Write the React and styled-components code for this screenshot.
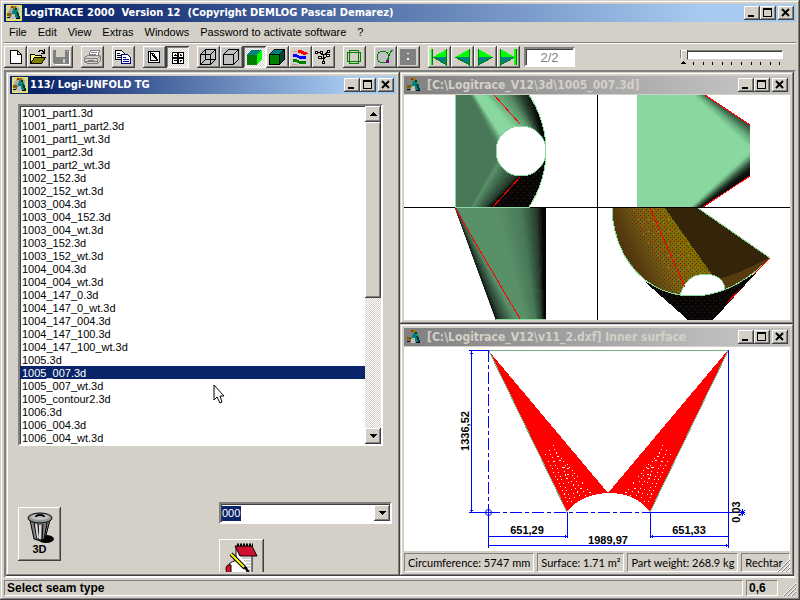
import React, { useState } from 'react';
import styled, { createGlobalStyle } from 'styled-components';

const FILES = [
  '1001_part1.3d',
  '1001_part1_part2.3d',
  '1001_part1_wt.3d',
  '1001_part2.3d',
  '1001_part2_wt.3d',
  '1002_152.3d',
  '1002_152_wt.3d',
  '1003_004.3d',
  '1003_004_152.3d',
  '1003_004_wt.3d',
  '1003_152.3d',
  '1003_152_wt.3d',
  '1004_004.3d',
  '1004_004_wt.3d',
  '1004_147_0.3d',
  '1004_147_0_wt.3d',
  '1004_147_004.3d',
  '1004_147_100.3d',
  '1004_147_100_wt.3d',
  '1005.3d',
  '1005_007.3d',
  '1005_007_wt.3d',
  '1005_contour2.3d',
  '1006.3d',
  '1006_004.3d',
  '1006_004_wt.3d',
];

const MENUS = ['File', 'Edit', 'View', 'Extras', 'Windows', 'Password to activate software', '?'];

const Cube = ({ hidden, top = 'none', front = 'none', side = 'none', stroke = '#000' }) => (
  <g stroke={stroke}>
    <path d="M3.5 8.5l5-5h10l-5 5z" fill={top} />
    <path d="M3.5 8.5h10v10h-10z" fill={front} />
    <path d="M13.5 8.5l5-5v10l-5 5z" fill={side} />
    {hidden && <path d="M8.5 3.5v10h10M8.5 13.5l-5 5" fill="none" />}
  </g>
);

const Play = () => (
  <>
    <path d="M4 3L19 11H4z" fill="#0f0" />
    <path d="M4 11H19L4 19z" fill="#008080" />
    <path d="M4.5 3v16L19 11" fill="none" stroke="#008000" />
  </>
);

const ICONS = {
  new: <path d="M6.5 4.5h7l4 4v9h-11zM13.5 4.5v4h4" fill="#fff" stroke="#000" />,
  open: (
    <>
      <path d="M3.5 17.5v-9h4l1 1h6v3h-7z" fill="#ffff80" stroke="#000" />
      <path d="M3.5 17.5l4-6h11l-4 6z" fill="#808000" stroke="#000" />
      <path d="M11 5.5h1l1-1h2l2 2M17.5 3v4h-4" fill="none" stroke="#000" />
    </>
  ),
  save: (
    <>
      <path d="M4 5h16v14H5z" fill="#fff" />
      <path d="M3 4h16v14H4l-1-1z" fill="#808080" />
      <path d="M6 4h9v7H6zM13 13h2v4h-2zM17 5h1v1h-1z" fill="#d4d0c8" />
    </>
  ),
  print: (
    <g fill="none" stroke="#808080">
      <path d="M7.5 10.5l2-6h9l-2 6M10 6.5h6M9 8.5h6" fill="#fff" />
      <path d="M3.5 11.5l3-2h11l2 1v4l-3 3h-10l-3-2z" fill="#d4d0c8" />
      <path d="M3 12.5h13l3-2M4 15.5h12M16.5 12v5M6 17.5h9M7 14h6" />
    </g>
  ),
  copy: (
    <g fill="#fff">
      <path d="M3.5 4.5h6l3 3v6h-9z" stroke="#000" />
      <path d="M5 7.5h3M5 9.5h5M5 11.5h5" stroke="#000" />
      <path d="M9.5 8.5h6l3 3v6h-9z" stroke="#000080" />
      <path d="M11 11.5h3M11 13.5h6M11 15.5h6" stroke="#000080" />
    </g>
  ),
  page: (
    <>
      <path d="M2 2h18v18H2z" fill="#c0c0c0" />
      <path d="M5.5 5.5h11v11h-11z" fill="#fff" stroke="#000" />
      <path d="M7.5 14.5v-7h3l4 6v1zM7 6l8 9" fill="none" stroke="#000" />
    </>
  ),
  grid: (
    <>
      <path d="M6.5 6.5h11v11h-11z" fill="#fff" stroke="#000" />
      <path d="M12 6v12M6 12h12" stroke="#000" strokeWidth="2" />
      <path d="M8 9.5h3M14 9.5h2M8 14.5h3M14 14.5h2M9.5 8v2M14.5 8v2M14.5 14v2" stroke="#000" />
    </>
  ),
  wire: (
    <>
      <path d="M2 2h18v18H2z" fill="#c0c0c0" />
      <Cube hidden />
    </>
  ),
  lines: (
    <>
      <path d="M2 2h18v18H2z" fill="#c0c0c0" />
      <Cube />
    </>
  ),
  shade: <Cube top="#008080" front="#008000" side="#00ff00" stroke="none" />,
  solid: <Cube top="#008080" front="#008000" side="#004830" />,
  waves: (
    <g fill="none" strokeWidth="3">
      <path d="M9 5.5h3q3 3 6 1" stroke="#f00" />
      <path d="M4 10q4-1 6 1t7 0" stroke="#00f" />
      <path d="M4 15q4-1 6 1t7 0" stroke="#008000" />
      <path d="M4 5.5h4M3 18.5h5" stroke="#d89090" strokeWidth="1" />
    </g>
  ),
  nodes: (
    <g fill="none" stroke="#000">
      <path d="M4 6.5h4l2 2h3l3-3M11.5 9v7M8 11l3 2M14 11l-3 2" />
      <path d="M3.5 5.5h2v2h-2zM8.5 5.5h2v2h-2zM15.5 4.5h2v2h-2zM14.5 8.5h3v2h-3zM6.5 10.5h3v2h-3zM10.5 15.5h2v2h-2z" fill="#fff" />
    </g>
  ),
  frame: (
    <>
      <path d="M3 3h17v16H3z" fill="#d4d0c8" />
      <path d="M6.5 4.5h9v13h-9zM4.5 6.5h13v9h-13z" fill="none" stroke="#008000" />
    </>
  ),
  tangent: (
    <>
      <path d="M2 2h18v18H2z" fill="#c0c0c0" />
      <circle cx="9" cy="11" r="6" fill="none" stroke="#008000" />
      <path d="M19 4q-3 1-4 6l-2 5" fill="none" stroke="#008000" />
      <path d="M12 14h3v3h-3z" fill="#800080" />
    </>
  ),
  panel: (
    <>
      <path d="M3 3h16v16H3z" fill="#808080" />
      <path d="M10 7h2v1h-2zM10 12h2v2h-2z" fill="#fff" />
    </>
  ),
  first: (
    <>
      <path d="M3 3h2v16H3z" fill="#008000" />
      <path d="M3 3h1v16H3z" fill="#0f0" />
      <path d="M19 3L5 11h14z" fill="#0f0" />
      <path d="M5 11h14v8z" fill="#008080" />
      <path d="M18.5 3v16L5 11" fill="none" stroke="#008000" />
    </>
  ),
  prev: (
    <g transform="matrix(-1 0 0 1 23 0)">
      <Play />
    </g>
  ),
  next: <Play />,
  last: (
    <>
      <g transform="translate(-1 0)">
        <Play />
      </g>
      <path d="M17 3h3v16h-3z" fill="#0f0" />
      <path d="M19 3h1v16h-1z" fill="#008000" />
    </>
  ),
};

const TOOL_GROUPS = [
  ['new', 'open', 'save'],
  ['print'],
  ['copy'],
  ['page', 'grid'],
  ['wire', 'lines', 'shade', 'solid', 'waves', 'nodes'],
  ['frame'],
  ['tangent', 'panel'],
  ['first', 'prev', 'next', 'last'],
];

const Logo = ({ dim }) => (
  <svg width="16" height="16" viewBox="0 0 16 16" shapeRendering="crispEdges" aria-hidden="true">
    {!dim && (
      <>
        <path d="M0 0h16v16H0z" fill="#d8d4a0" />
        <path d="M.5 .5h15v15H.5z" fill="none" stroke="#f0ec30" strokeDasharray="2 1" />
        <path d="M5 1h5l3 3v9H2V7z" fill="#a8a8a0" />
      </>
    )}
    <path d="M5 1h3v2H5z" fill="#c02010" />
    <path d="M7 1h3v3H7z" fill="#888000" />
    <path d="M7 4h2l4 9h-3L8 8l-2 3H5z" fill="#008080" />
    <path d="M9 3h2l3 10h-2z" fill="#003838" />
    <path d="M1 8h4v3H1zM4 10h2v2H4z" fill="#806000" />
    <path d="M6 9h3v5H5v-3z" fill="#c0c0c0" />
    <path d="M1 12h3v1H1zM10 13h4v1h-4z" fill="#000" />
    <path d="M10 5h2v2h-2z" fill="#00a050" />
  </svg>
);

const CaptionButtons = () => (
  <CaptionGroup>
    <CaptionButton type="button" aria-label="Minimize">
      <svg width="16" height="14" shapeRendering="crispEdges">
        <path d="M4 9h6v2H4z" />
      </svg>
    </CaptionButton>
    <CaptionButton type="button" aria-label="Maximize">
      <svg width="16" height="14" shapeRendering="crispEdges">
        <path d="M3 2h9v9H3zM4 4v6h7V4z" fillRule="evenodd" />
      </svg>
    </CaptionButton>
    <CaptionButton type="button" aria-label="Close" $gap>
      <svg width="16" height="14">
        <path d="M4 3l7 7M11 3l-7 7" stroke="#000" strokeWidth="2" />
      </svg>
    </CaptionButton>
  </CaptionGroup>
);

const TitleBar = ({ title, inactive }) => (
  <Caption $inactive={inactive}>
    <Logo dim={inactive} />
    <CaptionText $inactive={inactive}>{title}</CaptionText>
    <CaptionButtons />
  </Caption>
);

const Arrow = ({ up }) => (
  <svg width="7" height="4" viewBox="0 0 7 4" shapeRendering="crispEdges" aria-hidden="true">
    <path d={up ? 'M3 0h1v1h1v1h1v1h1v1H0V3h1V2h1V1h1z' : 'M0 0h7v1H6v1H5v1H4v1H3V3H2V2H1V1H0z'} />
  </svg>
);

const mix = (a, b, t) => a.map((v, i) => Math.round(v + (b[i] - v) * t));

// Colour at position t of a list of [position, [r, g, b]] stops
const shadeAt = (stops, t) => {
  let i = 1;
  while (i < stops.length - 1 && stops[i][0] < t) i += 1;
  const [p0, c0] = stops[i - 1];
  const [p1, c1] = stops[i];
  return `rgb(${mix(c0, c1, Math.max(0, Math.min(1, (t - p0) / (p1 - p0)))).join(',')})`;
};

const DARK = [72, 120, 88];
const MID = [88, 144, 104];
const LIGHT = [136, 216, 160];
const DEEP = [40, 64, 48];
const BLACK = [8, 6, 2];

// Strips ruled between two edges; from(t) and to(t) give the end points
const Ruled = ({ from, to, stops, count = 28 }) => (
  <>
    {Array.from({ length: count }, (_, i) => {
      const a = i / count;
      const b = (i + 1) / count;
      const colour = shadeAt(stops, (a + b) / 2);
      const points = [from(a), from(b), to(b), to(a)].map((p) => p.join(',')).join(' ');
      return <polygon key={i} points={points} fill={colour} stroke={colour} />;
    })}
  </>
);

const line = (x1, y1, x2, y2) => (t) => [x1 + (x2 - x1) * t, y1 + (y2 - y1) * t];

const hole = (sign) => (t) => {
  const a = Math.PI * (1 - t);
  return [117 + 25 * Math.cos(a), 56 - sign * 25 * Math.sin(a)];
};

const rim = (sign) => (t) => {
  if (t < 0.5) return [43, 56 - sign * 101];
  const a = Math.PI * (1 - t);
  return [41 + 101 * Math.cos(a), 56 - sign * 101 * Math.sin(a)];
};

const ModelViews = () => (
  <Drawing viewBox="0 0 386 225" shapeRendering="crispEdges" role="img" aria-label="Four views of the part">
    <defs>
      <clipPath id="topView">
        <path d="M51 0H125A101 101 0 0 1 125 112H51z" />
      </clipPath>
      <clipPath id="sideView">
        <path d="M233 0H301L346 30V81L299 112H233z" />
      </clipPath>
      <clipPath id="frontView">
        <path d="M51 113H142V225H92z" />
      </clipPath>
      <clipPath id="isoView">
        <path d="M208 113Q208 136 220 160Q244 201 290 201Q330 200 366 163L294 113z" />
      </clipPath>
      <linearGradient id="rust" gradientUnits="userSpaceOnUse" x1="214" y1="165" x2="275" y2="135">
        <stop offset="0" stopColor="#483008" />
        <stop offset="0.25" stopColor="#583c10" />
        <stop offset="0.6" stopColor="#786010" />
        <stop offset="1" stopColor="#807000" />
      </linearGradient>
      <pattern id="grain" width="4" height="4" patternUnits="userSpaceOnUse">
        <path d="M0 0h1v1H0zM2 2h1v1H2z" fill="#483410" />
      </pattern>
      <pattern id="sparks" width="10" height="12" patternUnits="userSpaceOnUse">
        <path d="M1 1h1v1H1zM6 3h1v1H6zM3 7h1v1H3zM8 10h1v1H8z" fill="#f00" />
        <path d="M4 4h1v1H4zM9 7h1v1H9z" fill="#908870" />
      </pattern>
      <pattern id="soot" width="6" height="6" patternUnits="userSpaceOnUse">
        <path d="M0 0h6v6H0z" fill="#080604" />
        <path d="M0 1h1v1H0zM3 4h1v1H3z" fill="#302410" />
        <path d="M4 1h1v1H4z" fill="#101038" />
      </pattern>
    </defs>

    <path d="M0 112.5H386M193.5 0V225" stroke="#000" />

    <g clipPath="url(#topView)">
      <path d="M51 0H145V112H51z" fill="#487858" />
      <Ruled
        from={rim(1)}
        to={hole(1)}
        stops={[[0, DARK], [0.08, DARK], [0.14, MID], [0.22, LIGHT], [0.38, LIGHT], [0.5, [112, 184, 136]], [0.62, MID], [0.74, DEEP], [0.86, BLACK], [1, BLACK]]}
        count={48}
      />
      <Ruled
        from={rim(-1)}
        to={hole(-1)}
        stops={[[0, DARK], [0.1, DARK], [0.16, MID], [0.24, DARK], [0.42, DEEP], [0.52, BLACK], [1, BLACK]]}
        count={48}
      />
      <path d="M116 82L145 60V112H90z" fill="url(#soot)" />
    </g>
    <path d="M125 0A101 101 0 0 1 125 112M51.5 0V112.5H126" fill="none" stroke="#88d8a0" />
    <circle cx="117" cy="56" r="25" fill="#fff" stroke="#88d8a0" />
    <path d="M90 0L116 29M116 82L89 112" stroke="#f00" />

    <g clipPath="url(#sideView)">
      <path d="M233 0H346V112H233z" fill="#88d8a0" />
      <Ruled
        from={line(302, 0, 284, -4)}
        to={line(346, 30, 346, 54)}
        stops={[[0, [40, 72, 52]], [0.3, DARK], [0.6, [104, 176, 128]], [1, LIGHT]]}
      />
      <Ruled
        from={line(300, 112, 284, 114)}
        to={line(346, 81, 346, 57)}
        stops={[[0, BLACK], [0.3, [16, 20, 16]], [0.5, DEEP], [0.75, MID], [1, LIGHT]]}
      />
    </g>
    <path d="M301 0L346 30M346 81L299 112" stroke="#f00" />

    <g clipPath="url(#frontView)">
      <path d="M51 113H142V225H92z" fill="#589068" />
      <Ruled from={line(51, 113, 54, 113)} to={line(91, 225, 112, 225)} stops={[[0, BLACK], [0.3, DEEP], [0.8, DARK], [1, MID]]} />
      <Ruled
        from={line(93, 113, 142, 113)}
        to={line(122, 225, 142, 225)}
        stops={[[0, MID], [0.5, DARK], [0.8, DEEP], [0.94, BLACK], [1, BLACK]]}
      />
    </g>
    <path d="M51 113L116 224" stroke="#f00" />
    <path d="M92 224.5H142" stroke="#88d8a0" />

    <path d="M240 186Q290 214 352 178L309 225H284z" fill="url(#soot)" />
    <g clipPath="url(#isoView)">
      <path d="M206 113H368V204H206z" fill="url(#rust)" />
      <path d="M206 113H262L312 182L280 204H206z" fill="url(#grain)" />
      <path d="M222 113H260L300 170L276 200z" fill="url(#sparks)" />
      <path d="M261 113H294L368 163L340 172L309 181z" fill="#342409" />
      <path d="M309 181Q340 178 368 161V204H300z" fill="#583c10" />
      <path d="M306 178L314 184Q338 178 366 162L340 160z" fill="#342409" />
      <path d="M276 201Q281 180 301 179Q320 180 322 196V204H276z" fill="#fff" />
    </g>
    <path d="M208 113Q208 136 220 160Q244 201 290 201Q330 200 366 163L294 113" fill="none" stroke="#88d8a0" />
    <path d="M276 201Q281 180 301 179Q320 180 321 195" fill="none" stroke="#88d8a0" />
    <path d="M246 113L281 192M323 208L336 194M349 180L366 163" stroke="#f00" />
  </Drawing>
);

const UnfoldView = () => (
  <Drawing viewBox="0 0 386 204" shapeRendering="crispEdges" role="img" aria-label="Unfolded surface with dimensions">
    <path d="M84 3L204 146L324 3L246 165Q232 146 205 146Q176 147 163 165z" fill="#f00" />
    <path d="M84 3.5H324M84.5 3L163 165M324.5 3L246 165" fill="none" stroke="#78b088" />
    <g stroke="#fff" strokeDasharray="1 3">
      <path d="M141 107L165 157M145 103L168 156M149 98L172 153M152 106L177 151M157 111L182 149M163 117L188 148" />
      <path d="M267 107L243 157M263 103L240 156M259 98L236 153M256 106L231 151M251 111L226 149M245 117L220 148" />
    </g>
    <g fill="none" stroke="#00f">
      <path d="M65 3.5H84M67.5 3V165M65 165.5H84M84.5 165V201M84 189.5H163M163.5 165V191" />
      <path d="M84 198.5H324M324.5 3V201M246.5 165V191M246 189.5H324M246 165.5H341" />
      <path d="M66 6.5h3M66 163.5h3M161.5 188v3M248.5 188v3M322.5 197v3M336 163l5 5M341 163l-5 5M338.5 162v7" />
      <path d="M84.5 3V165M84 165.5H246" strokeDasharray="12 3 4 3" />
      <circle cx="84.5" cy="165.5" r="3" shapeRendering="auto" />
    </g>
    <Dimension x="123" y="187">651,29</Dimension>
    <Dimension x="285" y="187">651,33</Dimension>
    <Dimension x="204" y="197">1989,97</Dimension>
    <Dimension transform="translate(65 84) rotate(-90)">1336,52</Dimension>
    <Dimension transform="translate(336 165) rotate(-90)">0,03</Dimension>
  </Drawing>
);

const SizeGrip = () => (
  <Grip width="13" height="13" viewBox="0 0 13 13" aria-hidden="true">
    <path d="M0 13L13 0M4 13L13 4M8 13L13 8" stroke="#fff" />
    <path d="M1 13L13 1M5 13L13 5M9 13L13 9" stroke="#808080" />
  </Grip>
);

const App = () => {
  const [selected, setSelected] = useState('1005_007.3d');
  const [mode, setMode] = useState('shade');
  const [code, setCode] = useState('000');

  return (
    <>
      <GlobalStyle />
      <MainWindow>
        <TitleBar title={'LogiTRACE 2000\u00a0 Version 12\u00a0 (Copyright DEMLOG Pascal Demarez)'} />
        <MenuBar>
          {MENUS.map((menu) => (
            <MenuButton key={menu} type="button">
              {menu}
            </MenuButton>
          ))}
        </MenuBar>

        <Toolbar>
          {TOOL_GROUPS.map((group) => (
            <ToolGroup key={group[0]}>
              {group.map((tool) => (
                <ToolButton
                  key={tool}
                  type="button"
                  aria-label={tool}
                  $pressed={tool === 'grid' || tool === mode}
                  onClick={() => ['wire', 'lines', 'shade', 'solid'].includes(tool) && setMode(tool)}
                >
                  <svg width="23" height="22" viewBox="0 0 23 22" shapeRendering="crispEdges">
                    {ICONS[tool]}
                  </svg>
                </ToolButton>
              ))}
            </ToolGroup>
          ))}
          <PageField aria-label="Page" defaultValue="2/2" />
          <Slider>
            <SliderInput type="range" min="0" max="10" defaultValue="0" aria-label="Speed" />
            <svg width="100%" height="5" viewBox="0 0 103 5" shapeRendering="crispEdges" aria-hidden="true">
              <path d="M3 0h1v1h1v1h1v1H1V2h1V1h1z" />
              {Array.from({ length: 10 }, (_, i) => (
                <path key={i} d={`M${13 + Math.round(i * 9.6)} 1h1v3h-1z`} />
              ))}
            </svg>
          </Slider>
        </Toolbar>

        <Workspace>
          <ChildWindow $tall>
            <TitleBar title="113/ Logi-UNFOLD TG" />
            <Dialog>
              <ListFrame>
                <List role="listbox" aria-label="Parts">
                  {FILES.map((file) => (
                    <ListItem
                      key={file}
                      role="option"
                      aria-selected={file === selected}
                      $selected={file === selected}
                      onClick={() => setSelected(file)}
                    >
                      {file}
                    </ListItem>
                  ))}
                </List>
                <ScrollBar>
                  <ScrollButton type="button" aria-label="Scroll up">
                    <Arrow up />
                  </ScrollButton>
                  <ScrollThumb />
                  <ScrollButton type="button" aria-label="Scroll down">
                    <Arrow />
                  </ScrollButton>
                </ScrollBar>
                <Pointer width="13" height="21" viewBox="0 0 13 21" aria-hidden="true">
                  <path d="M1 1V16L4 13L7 19L9 18L7 12H11z" fill="#fff" stroke="#000" />
                </Pointer>
              </ListFrame>

              <DialogFooter>
                <DeleteButton type="button">
                  <svg width="28" height="32" viewBox="0 0 28 32" aria-hidden="true">
                    <ellipse cx="20" cy="28" rx="8" ry="4" fill="#000" />
                    <path d="M4 9L8 28Q13 31 19 28L24 9z" fill="#808080" stroke="#000" />
                    <path d="M8 12l3 16M12 13l1 16M17 13l-1 16M21 12l-3 16" stroke="#000" />
                    <path d="M10 13l2 14M14 14v14" stroke="#d8d8d8" strokeWidth="2" />
                    <ellipse cx="14" cy="7" rx="12" ry="5" fill="#909898" stroke="#000" />
                    <ellipse cx="14" cy="6" rx="9" ry="3" fill="#c0c0c0" />
                    <path d="M10 6q0-2 4-2t4 2" fill="none" stroke="#000" strokeWidth="2" />
                  </svg>
                  3D
                </DeleteButton>
                <FooterColumn>
                  <Combo>
                    <ComboInput aria-label="Seam code" value={code} onChange={(e) => setCode(e.target.value)} />
                    <ScrollButton type="button" aria-label="Open list">
                      <Arrow />
                    </ScrollButton>
                  </Combo>
                  <NotesButton type="button" aria-label="Notes">
                    <svg width="34" height="34" viewBox="0 0 34 34" aria-hidden="true">
                      <path d="M11 5H27V34H11z" fill="#fff" stroke="#000" />
                      <path d="M17 15h9M19 18h7M21 21h5M22 24h4M23 27h3" stroke="#a0a0a0" />
                      <path d="M10 3H27L32 13H15z" fill="#d01030" stroke="#000" />
                      <path d="M12 2H28" stroke="#000" strokeWidth="3" strokeDasharray="2 1" />
                      <path d="M4 21q7-6 12-2l6 6v4l-10 3-8-2z" fill="#fff" stroke="#000" />
                      <path d="M1 26q0-5 5-4v9H2z" fill="#e01020" stroke="#000" />
                      <path d="M6 11L20 25" stroke="#000" strokeWidth="4" />
                      <path d="M6 11L20 25" stroke="#ffff00" strokeWidth="2" />
                      <path d="M19 24l5 5" stroke="#000" strokeWidth="2" />
                    </svg>
                  </NotesButton>
                </FooterColumn>
              </DialogFooter>
            </Dialog>
          </ChildWindow>

          <ChildWindow>
            <TitleBar inactive title="[C:\Logitrace_V12\3d\1005_007.3d]" />
            <Canvas>
              <ModelViews />
            </Canvas>
          </ChildWindow>

          <ChildWindow>
            <TitleBar inactive title="[C:\Logitrace_V12\v11_2.dxf] Inner surface" />
            <Canvas>
              <UnfoldView />
            </Canvas>
            <InfoBar>
              <InfoPanel>Circumference: 5747 mm</InfoPanel>
              <InfoPanel>Surface: 1.71 m²</InfoPanel>
              <InfoPanel>Part weight: 268.9 kg</InfoPanel>
              <InfoPanel $fill>Rechtar</InfoPanel>
              <SizeGrip />
            </InfoBar>
          </ChildWindow>
        </Workspace>

        <StatusBar>
          <StatusPanel $fill>Select seam type</StatusPanel>
          <StatusPanel>0,6</StatusPanel>
          <SizeGrip />
        </StatusBar>
      </MainWindow>
    </>
  );
};

const GlobalStyle = createGlobalStyle`
  * {
    box-sizing: border-box;
  }

  body {
    margin: 0;
    background: #d4d0c8;
    color: #000;
    font: 11px/13px "Liberation Sans", Arial, sans-serif;
  }

  button, input {
    font: inherit;
    color: inherit;
    border: 0;
    border-radius: 0;
    padding: 0;
    margin: 0;
  }

  svg {
    display: block;
    flex: none;
  }
`;

const windowEdge = `
  padding: 4px;
  background: #d4d0c8;
  box-shadow: inset -1px -1px #404040, inset 1px 1px #d4d0c8, inset -2px -2px #808080, inset 2px 2px #fff;
`;

const raised = `
  background: #d4d0c8;
  box-shadow: inset -1px -1px #404040, inset 1px 1px #fff, inset -2px -2px #808080;
`;

const sunken = `
  border: 2px solid;
  border-color: #808080 #fff #fff #808080;
  box-shadow: inset 1px 1px #404040;
`;

const MainWindow = styled.div`
  ${windowEdge}
  display: flex;
  flex-direction: column;
  height: 100vh;
  min-height: 600px;
`;

const Caption = styled.header`
  display: flex;
  align-items: center;
  flex: none;
  height: 18px;
  padding: 0 2px;
  background: ${(p) =>
    p.$inactive
      ? 'linear-gradient(90deg, #808080, #c0c0c0 85%)'
      : 'linear-gradient(90deg, #0a246a, #0a246a 8%, #a6caf0 88%)'};
`;

const CaptionText = styled.h1`
  flex: 1;
  min-width: 0;
  margin: 0;
  padding-left: ${(p) => (p.$inactive ? '5px' : '2px')};
  overflow: hidden;
  color: ${(p) => (p.$inactive ? '#d4d0c8' : '#fff')};
  font: bold 11px/18px "DejaVu Sans Condensed", "DejaVu Sans", sans-serif;
  font-size: ${(p) => (p.$inactive ? '12px' : '11px')};
  white-space: nowrap;
`;

const CaptionGroup = styled.div`
  display: flex;
`;

const CaptionButton = styled.button`
  ${raised}
  width: 16px;
  height: 14px;
  margin-left: ${(p) => (p.$gap ? '2px' : '0')};
`;

const MenuBar = styled.nav`
  display: flex;
  flex: none;
  height: 22px;
  border-bottom: 1px solid #fff;
  box-shadow: inset 0 -1px #808080;
`;

const MenuButton = styled.button`
  height: 20px;
  padding: 0 6px 0 5px;
  background: transparent;
`;

const Toolbar = styled.div`
  display: flex;
  flex: none;
  align-items: center;
  height: 26px;
`;

const ToolGroup = styled.div`
  display: flex;
  margin-right: 8px;

  &:nth-of-type(8) {
    margin-right: 4px;
  }
`;

const ToolButton = styled.button`
  ${raised}
  width: 23px;
  height: 22px;
  ${(p) =>
    p.$pressed &&
    `
    background: repeating-conic-gradient(#fff 0 25%, #d4d0c8 0 50%) 0 0 / 2px 2px;
    box-shadow: inset 1px 1px #404040, inset -1px -1px #fff, inset 2px 2px #808080;
  `}
`;

const PageField = styled.input`
  ${sunken}
  width: 51px;
  height: 20px;
  background: #fff;
  color: #808080;
  font-size: 13px;
  text-align: center;
`;

const Slider = styled.div`
  width: 103px;
  margin-left: auto;
  margin-right: 13px;
`;

const SliderInput = styled.input`
  display: block;
  width: 100%;
  height: 13px;
  appearance: none;
  background: transparent;

  &::-webkit-slider-runnable-track {
    height: 9px;
    background: #fff;
    border: 1px solid;
    border-color: #808080 #fff #fff #808080;
    box-shadow: inset 0 1px #404040;
  }

  &::-webkit-slider-thumb {
    appearance: none;
    width: 7px;
    height: 12px;
    margin-top: -1px;
    background: #d4d0c8;
    box-shadow: inset -1px 0 #404040, inset 1px 1px #fff;
    clip-path: polygon(0 0, 100% 0, 100% 75%, 50% 100%, 0 75%);
  }
`;

const Workspace = styled.main`
  ${sunken}
  box-shadow: none;
  border-color: #808080 #d4d0c8 #fff #808080;
  display: grid;
  flex: 1;
  grid-template-columns: 1fr 1fr;
  grid-template-rows: 1fr 1fr;
  min-height: 0;
`;

const ChildWindow = styled.section`
  ${windowEdge}
  display: flex;
  flex-direction: column;
  grid-row: ${(p) => (p.$tall ? 'span 2' : 'auto')};
  min-width: 0;
  min-height: 0;
`;

const Dialog = styled.div`
  flex: 1;
  min-height: 0;
  padding: 10px 4px 0 8px;
  overflow: hidden;
`;

const ListFrame = styled.div`
  ${sunken}
  position: relative;
  display: flex;
  margin-right: 9px;
  background: #fff;
`;

const List = styled.ul`
  flex: 1;
  margin: 0;
  padding: 0;
  list-style: none;
`;

const ListItem = styled.li`
  height: 13px;
  padding-left: 2px;
  background: ${(p) => (p.$selected ? '#0a246a' : 'transparent')};
  color: ${(p) => (p.$selected ? '#fff' : '#000')};
  line-height: 15px;
  cursor: default;
`;

const ScrollBar = styled.div`
  display: flex;
  flex-direction: column;
  width: 16px;
  background: repeating-conic-gradient(#fff 0 25%, #d4d0c8 0 50%) 0 0 / 2px 2px;

  button:last-child {
    margin-top: auto;
  }
`;

const ScrollButton = styled.button`
  ${raised}
  display: flex;
  align-items: center;
  justify-content: center;
  flex: none;
  width: 16px;
  height: 16px;
`;

const ScrollThumb = styled.div`
  ${raised}
  height: 52%;
`;

const Pointer = styled.svg`
  position: absolute;
  left: 193px;
  top: 278px;
`;

const DialogFooter = styled.div`
  display: grid;
  grid-template-columns: 201px 1fr;
  align-items: start;
  padding-top: 56px;
`;

const DeleteButton = styled.button`
  ${raised}
  display: flex;
  flex-direction: column;
  align-items: center;
  width: 43px;
  height: 54px;
  margin-top: 5px;
  padding-top: 4px;
  font-weight: bold;
`;

const FooterColumn = styled.div`
  display: flex;
  flex-direction: column;
  gap: 15px;
`;

const Combo = styled.div`
  ${sunken}
  display: flex;
  justify-content: space-between;
  align-items: center;
  height: 22px;
  padding-left: 1px;
  background: #fff;
`;

const ComboInput = styled.input`
  width: 19px;
  height: 15px;
  background: #0a246a;
  color: #fff;
`;

const NotesButton = styled.button`
  ${raised}
  display: flex;
  justify-content: center;
  width: 45px;
  height: 44px;
  padding-top: 4px;
`;

const Canvas = styled.div`
  flex: 1;
  min-height: 0;
  margin-top: 1px;
  background: #fff;
`;

const Drawing = styled.svg`
  width: 100%;
  height: 100%;
`;

const Dimension = styled.text`
  font: bold 11px "Liberation Sans", Arial, sans-serif;
  text-anchor: middle;
`;

const InfoBar = styled.footer`
  position: relative;
  display: flex;
  flex: none;
  gap: 3px;
  margin-top: 2px;
`;

const InfoPanel = styled.div`
  flex: ${(p) => (p.$fill ? '1' : 'none')};
  min-width: 0;
  height: 19px;
  padding: 0 3px;
  overflow: hidden;
  border: 1px solid;
  border-color: #808080 #fff #fff #808080;
  font-family: Lato, "Liberation Sans", sans-serif;
  line-height: 17px;
  white-space: nowrap;
`;

const StatusBar = styled.footer`
  position: relative;
  display: flex;
  flex: none;
  gap: 3px;
  padding: 2px 18px 0 0;
`;

const StatusPanel = styled.div`
  flex: ${(p) => (p.$fill ? '1' : '0 0 32px')};
  height: 16px;
  padding: 0 2px;
  border: 1px solid;
  border-color: #808080 #fff #fff #808080;
  font-size: 12px;
  font-weight: bold;
  line-height: 14px;
  white-space: nowrap;
`;

const Grip = styled.svg`
  position: absolute;
  right: 0;
  bottom: 0;
`;

export default App;
